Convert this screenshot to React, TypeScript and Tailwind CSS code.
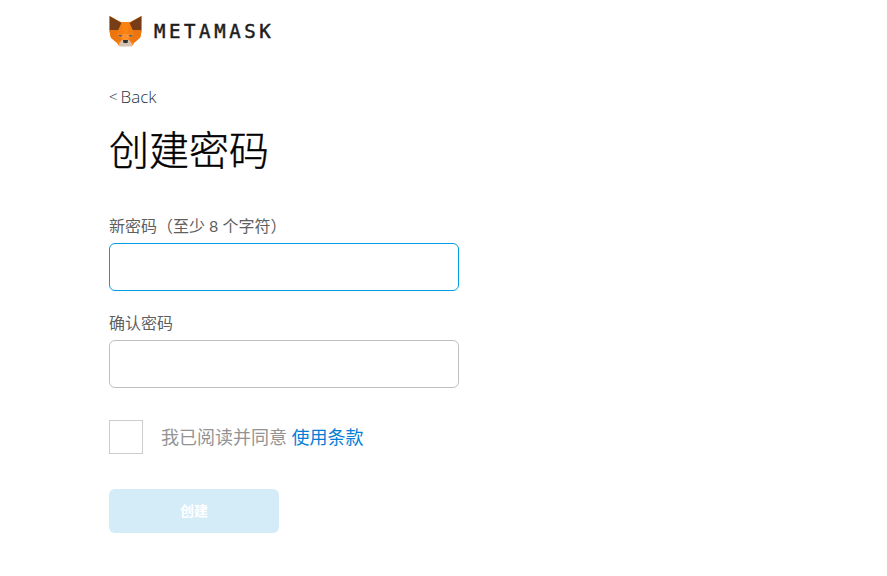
const cjk = "font-['Lato','Noto_Sans_CJK_SC',sans-serif]";

function FoxLogo() {
  return (
    <svg viewBox="0 0 33 32" className="w-[33px] h-[32px] shrink-0">
      {/* head outline */}
      <polygon points="0.5,1 12,7 21,7 32.5,1 33,14 31.5,22 26,27 23,31 10,31 7,27 1.5,22 0,14" fill="#f98412" />
      {/* ears */}
      <polygon points="0.5,1 12.5,8 9.5,15 1,15" fill="#763d16" />
      <polygon points="32.5,1 20.5,8 23.5,15 32,15" fill="#763d16" />
      {/* darker facets */}
      <polygon points="0.5,15 9.5,15 8,19 2,23" fill="#ea7410" />
      <polygon points="32.5,15 23.5,15 25,19 31,23" fill="#ea7410" />
      <polygon points="9.5,15 12.5,8 14.5,19 8,19" fill="#f47c10" />
      <polygon points="23.5,15 20.5,8 18.5,19 25,19" fill="#f47c10" />
      <polygon points="2,23 8,19 13,25 9,27 7,27" fill="#ec7612" />
      <polygon points="31,23 25,19 20,25 24,27 26,27" fill="#ec7612" />
      <polygon points="13,19 20,19 19.5,25 13.5,25" fill="#ff9030" />
      {/* eyes */}
      <polygon points="9,20 13.5,20 11.5,22" fill="#5a6070" />
      <polygon points="24,20 19.5,20 21.5,22" fill="#5a6070" />
      {/* snout */}
      <polygon points="13,25 20,25 23,29 23,31.5 10,31.5 10,29" fill="#d7c1b3" />
      <polygon points="14,25 19,25 18.5,28 14.5,28" fill="#2f2f2f" />
    </svg>
  );
}

export default function App() {
  return (
    <div className="min-h-[576px] bg-white pl-[109px] pt-[15px] pb-[43px] overflow-hidden">
      {/* Logo */}
      <div className="flex items-center gap-[12px] h-[32px]">
        <FoxLogo />
        <span className="font-['DejaVu_Sans_Mono',monospace] text-[19px] leading-none tracking-[3.6px] text-[#1d1d1d] [-webkit-text-stroke:0.5px_#1d1d1d]">
          METAMASK
        </span>
      </div>

      {/* Back */}
      <div className="mt-[39px] h-[20px] flex items-center font-['Open_Sans',sans-serif] font-light text-[17px] leading-none text-[#24323d]">
        <span className="mr-[3px] text-[15px]">&lt;</span>
        Back
      </div>

      {/* Title */}
      <h1 className={`${cjk} mt-[18px] h-[52px] text-[40px] leading-[52px] font-light text-black [-webkit-text-stroke:0.4px_#000]`}>
        创建密码
      </h1>

      {/* Form */}
      <form className="mt-[39px] w-[350px]">
        <label className={`${cjk} block h-[22px] text-[16px] leading-[22px] text-[#5f5f5f]`}>
          新密码（至少 8 个字符）
        </label>
        <input
          type="password"
          className="block mt-[6px] w-full h-[48px] rounded-[6px] border border-[#009fe3] bg-white outline-none"
        />
        <label className={`${cjk} block mt-[21px] h-[22px] text-[16px] leading-[22px] text-[#5f5f5f]`}>
          确认密码
        </label>
        <input
          type="password"
          className="block mt-[6px] w-full h-[48px] rounded-[6px] border border-[#bbc0c5] bg-white outline-none"
        />

        <div className="mt-[32px] flex items-center gap-[18px] w-[400px]">
          <div className="w-[34px] h-[34px] border border-[#cccccc] shrink-0" />
          <span className={`${cjk} text-[18px] leading-[24px] text-[#939393]`}>
            我已阅读并同意 <span className="text-[#037dd6]">使用条款</span>
          </span>
        </div>

        <button
          type="button"
          className={`${cjk} block mt-[35px] w-[170px] h-[44px] rounded-[6px] bg-[#d3ecf8] text-white text-[14px] font-bold pb-[2px]`}
        >
          创建
        </button>
      </form>
    </div>
  );
}
